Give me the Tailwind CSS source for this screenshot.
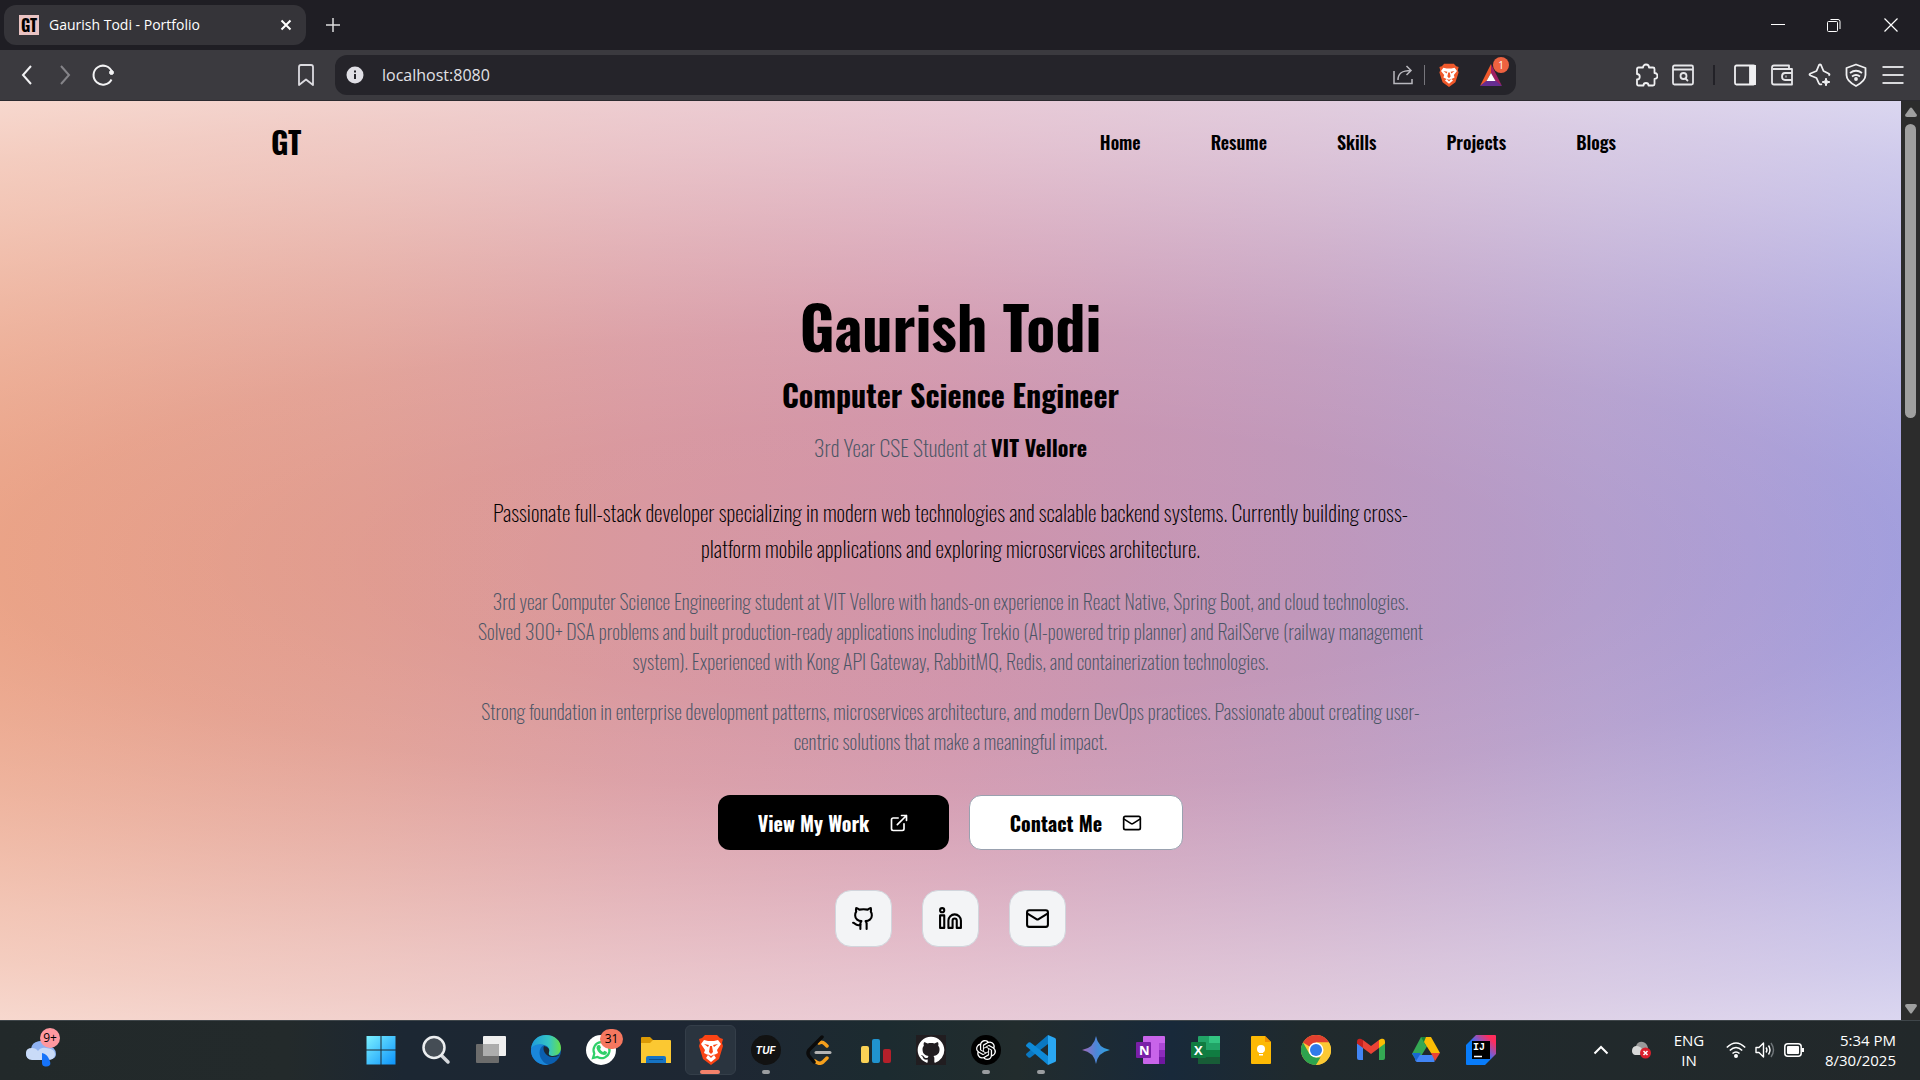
<!DOCTYPE html>
<html lang="en">
<head>
<meta charset="utf-8">
<title>Gaurish Todi - Portfolio</title>
<script src="https://cdn.jsdelivr.net/npm/@tailwindcss/browser@4"></script>
</head>
<body class="flex min-h-screen flex-col overflow-hidden bg-[#1f1e24] font-['Segoe_UI','Open_Sans',sans-serif] text-white">

<!-- Tab strip -->
<div class="flex h-[50px] items-center pl-1">
  <div class="flex h-10 w-[302px] items-center rounded-xl bg-[#353439] pl-[15px] pr-[10px]">
    <span class="flex size-5 items-center justify-center bg-[#e9c3c3] font-['Oswald','Roboto_Condensed','Liberation_Sans_Narrow',sans-serif] text-base font-bold text-black">GT</span>
    <span class="ml-[10px] flex-1 text-sm">Gaurish Todi - Portfolio</span>
    <button aria-label="Close tab" class="p-1"><svg class="size-3" viewBox="0 0 12 12" fill="none" stroke="#fff" stroke-width="2"><path d="M1.500 1.500l9 9M10.500 1.500l-9 9"/></svg></button>
  </div>
  <button aria-label="New tab" class="ml-[17px] p-0.5"><svg class="size-4" viewBox="0 0 16 16" fill="none" stroke="#ddd" stroke-width="1.500"><path d="M8 1v14M1 8h14"/></svg></button>
  <div class="ml-auto flex items-center">
    <button aria-label="Minimize" class="flex h-10 w-14 items-center justify-center"><svg class="size-4" viewBox="0 0 16 16" stroke="#fff"><path d="M1 7.500h14"/></svg></button>
    <button aria-label="Restore" class="flex h-10 w-14 items-center justify-center"><svg class="size-4" viewBox="0 0 16 16" fill="none" stroke="#fff"><rect x="1.500" y="4.500" width="10" height="10" rx="1"/><path d="M4.500 2.500h7.500a2 2 0 0 1 2 2v7.500"/></svg></button>
    <button aria-label="Close" class="flex h-10 w-[58px] items-center justify-center"><svg class="size-4" viewBox="0 0 16 16" fill="none" stroke="#fff" stroke-width="1.200"><path d="M1.500 1.500l13 13M14.500 1.500l-13 13"/></svg></button>
  </div>
</div>

<!-- Toolbar -->
<div class="flex h-[51px] items-center border-b border-[#2b2a2f] bg-[#3b3a3f] pl-2 pr-[9px]">
  <button aria-label="Back" class="flex w-[38px] justify-center"><svg class="size-6" viewBox="0 0 24 24" fill="none" stroke="#f2f2f4" stroke-width="2"><path d="M16 3l-8 9 8 9"/></svg></button>
  <button aria-label="Forward" class="flex w-[38px] justify-center"><svg class="size-6" viewBox="0 0 24 24" fill="none" stroke="#858489" stroke-width="2"><path d="M8 3l8 9-8 9"/></svg></button>
  <button aria-label="Reload" class="flex w-[38px] justify-center"><svg class="size-6" viewBox="0 0 24 24" fill="none" stroke="#f2f2f4" stroke-width="2"><path d="M20.500 16.500A9.500 9.500 0 1 1 21 9"/><circle cx="20.500" cy="9.500" r="2" fill="#f2f2f4" stroke-width="1"/></svg></button>
  <button aria-label="Bookmark this page" class="ml-[165px] mr-[10px] flex w-[38px] justify-center"><svg class="size-6" viewBox="0 0 24 24" fill="none" stroke="#dcdbe0" stroke-width="1.800" stroke-linejoin="round"><path d="M5 4q0-2 2-2h10q2 0 2 2v18l-7-5.500L5 22z"/></svg></button>
  <div class="mr-[111px] flex h-10 flex-1 items-center rounded-xl bg-[#25242a] pl-[11px] pr-[13px]">
    <svg class="size-[18px]" viewBox="0 0 18 18"><circle cx="9" cy="9" r="8.500" fill="#e0dfe5"/><path d="M9 8v5M9 4.500v2" stroke="#25242a" stroke-width="2"/></svg>
    <input aria-label="Address" value="localhost:8080" class="ml-[18px] min-w-0 flex-1 bg-transparent text-base text-[#e2e1e6]">
    <button aria-label="Share"><svg class="size-[22px]" viewBox="0 0 22 22" fill="none" stroke="#b9b8be" stroke-width="1.500"><path d="M2 7v12.500h18V15M6 16c0-7 4-9.500 13-9.500M14.500 2l4.500 4.500-4.500 4.500"/></svg></button>
    <span class="ml-[10px] h-5 w-px bg-[#77767c]"></span>
    <button aria-label="Brave Shields" class="ml-3"><svg class="size-6" viewBox="0 0 30 30"><path fill="#f0592b" d="M9 1h12l3 3 3 1-1 4 1 3-4 12-8 6-8-6L3 12l1-3-1-4 3-1z"/><path fill="#fff" d="M8 6l4 1h6l4-1 3 4-4 5 1 3-4 2 2 2-5 4-5-4 2-2-4-2 1-3-4-5z"/><path fill="#f0592b" d="M8 10l5 1-1 2zM22 10l-5 1 1 2zM14 12h2l1 5-2 2-2-2zM12 20l3 1 3-1-3 3z"/></svg></button>
    <button aria-label="Brave Rewards" class="relative ml-[18px]"><svg class="size-6" viewBox="0 0 24 24"><path fill="#f0592b" d="M12 1v9l-5 9-6 4z"/><path fill="#9e1f63" d="M12 1v9l5 9 6 4z"/><path fill="#662d91" d="M1 23h22l-6-5H7z"/><path fill="#fff" d="M12 10l4.500 8h-9z"/></svg><span class="absolute -right-1.5 -top-1.5 flex size-4 items-center justify-center rounded-full bg-[#ee6240] text-[10px] leading-4">1</span></button>
  </div>
  <button aria-label="Extensions" class="flex w-[37px] justify-center"><svg class="size-6" viewBox="0 0 24 24" fill="none" stroke="#f0f0f2" stroke-width="1.800" stroke-linejoin="round"><path d="M3 6q0-1.500 1.500-1.500H9a3 3 0 0 1 6 0h4q1.500 0 1.500 1.500v4a3 3 0 0 1 0 6v5q0 1.500-1.500 1.500h-4.500a2.500 2.500 0 0 0-5 0h-5Q3 22.500 3 21v-4.500a2.700 2.700 0 0 0 0-5.500z"/></svg></button>
  <button aria-label="Search tabs" class="flex w-[37px] justify-center"><svg class="size-6" viewBox="0 0 24 24" fill="none" stroke="#e6e6e9" stroke-width="1.800"><rect x="2" y="2.500" width="20" height="19" rx="1.500"/><path d="M2 6.500h20M14.500 15.500l2.500 2.500"/><circle cx="12.500" cy="13" r="3"/></svg></button>
  <span class="ml-3 mr-[11px] h-5 w-0.5 bg-[#222127]"></span>
  <button aria-label="Sidebar" class="flex w-[37px] justify-center"><svg class="size-6" viewBox="0 0 24 24" fill="none" stroke="#f0f0f2" stroke-width="1.800"><rect x="2" y="2.500" width="20" height="19" rx="1.500"/><path fill="#f0f0f2" d="M17 3h5v18h-5z"/></svg></button>
  <button aria-label="Wallet" class="flex w-[37px] justify-center"><svg class="size-6" viewBox="0 0 24 24" fill="none" stroke="#e6e6e9" stroke-width="1.800" stroke-linejoin="round"><path d="M19 6V2.500H4q-2 0-2 2v15q0 2 2 2h18V6H3M22 10h-7q-3 0-3 3.500t3 3.500h7M15.500 13.500h1"/></svg></button>
  <button aria-label="Leo AI" class="flex w-[37px] justify-center"><svg class="size-6" viewBox="0 0 24 24" fill="none" stroke="#f0f0f2" stroke-width="1.800" stroke-linejoin="round"><path d="M15 21c-2 1-3 0-3.500-1.500l-2-4.500-6-2.500q-2-1 0-2l6-2.500L12 2q1-1 2 0l2.500 6 5 2.500q2 1 0 2"/><path fill="#f0f0f2" stroke-width="1" d="M19 15l1 3 3 1-3 1-1 3-1-3-3-1 3-1z"/></svg></button>
  <button aria-label="VPN" class="flex w-[37px] justify-center"><svg class="size-6" viewBox="0 0 24 24" fill="none" stroke="#f0f0f2" stroke-width="1.800" stroke-linejoin="round"><path d="M12 1.500l9.500 3.500v7q0 6-9.500 11Q2.500 18 2.500 12V5zM6 10q6-4.500 12 0M8 13.500q4-3 8 0"/><circle cx="12" cy="16" r="1"/></svg></button>
  <button aria-label="Menu" class="flex w-[37px] justify-center"><svg class="size-6" viewBox="0 0 24 24" stroke="#d9d9dc" stroke-width="2"><path d="M1.500 4h21M1.500 12h21M1.500 20h21"/></svg></button>
</div>

<!-- Web page and its scrollbar -->
<div class="flex flex-1">
  <div class="flex-1 bg-[linear-gradient(to_right,#e8997a_0%,#e09a8e_19%,#d8979f_34%,#d094ab_50%,#c096b9_68%,#b09acb_84%,#a697d2_92%,#9894d9_100%)] font-['Oswald','Roboto_Condensed','Liberation_Sans_Narrow',sans-serif] text-black">
    <div class="h-full bg-[radial-gradient(100%_50%_at_center,rgb(255_250_252/0)_0%,rgb(255_250_252/0.02)_30%,rgb(255_250_252/0.1)_50%,rgb(255_250_252/0.27)_70%,rgb(255_250_252/0.45)_90%,rgb(255_250_252/0.53)_100%,rgb(255_250_252/0.65)_112%)]">
      <header class="flex h-[82px] items-center justify-between pb-px pl-[271px] pr-[285px]">
        <a href="#" class="text-3xl font-bold">GT</a>
        <nav class="flex gap-[70px] text-lg font-semibold">
          <a href="#home">Home</a><a href="#resume">Resume</a><a href="#skills">Skills</a><a href="#projects">Projects</a><a href="#blogs">Blogs</a>
        </nav>
      </header>
      <main class="flex flex-col items-center whitespace-nowrap pt-[106px] text-center">
        <h1 class="text-[60px] font-bold leading-[72px]">Gaurish Todi</h1>
        <h2 class="mt-3.5 text-3xl font-bold leading-10">Computer Science Engineer</h2>
        <p class="mt-4 text-[22px] font-extralight leading-8 text-gray-600">3rd Year CSE Student at <strong class="font-bold text-black">VIT Vellore</strong></p>
        <p class="mt-[31px] text-[22px] font-extralight leading-9">Passionate full-stack developer specializing in modern web technologies and scalable backend systems. Currently building cross-<br>platform mobile applications and exploring microservices architecture.</p>
        <p class="mt-5 text-xl font-extralight leading-[30px] text-gray-600">3rd year Computer Science Engineering student at VIT Vellore with hands-on experience in React Native, Spring Boot, and cloud technologies.<br>Solved 300+ DSA problems and built production-ready applications including Trekio (AI-powered trip planner) and RailServe (railway management<br>system). Experienced with Kong API Gateway, RabbitMQ, Redis, and containerization technologies.</p>
        <p class="mt-5 text-xl font-extralight leading-[30px] text-gray-600">Strong foundation in enterprise development patterns, microservices architecture, and modern DevOps practices. Passionate about creating user-<br>centric solutions that make a meaningful impact.</p>
        <div class="mt-[39px] flex gap-5">
          <button class="flex h-[55px] w-[231px] items-center justify-center gap-5 rounded-xl bg-black text-xl font-bold text-white">View My Work <svg class="size-5" viewBox="0 0 24 24" fill="none" stroke="currentColor" stroke-width="2" stroke-linecap="round" stroke-linejoin="round"><path d="M15 3h6v6M10 14 21 3M18 13v6a2 2 0 0 1-2 2H5a2 2 0 0 1-2-2V8a2 2 0 0 1 2-2h6"/></svg></button>
          <button class="flex h-[55px] w-[214px] items-center justify-center gap-5 rounded-xl border border-gray-400 bg-white text-xl font-bold">Contact Me <svg class="size-5" viewBox="0 0 24 24" fill="none" stroke="currentColor" stroke-width="2" stroke-linecap="round" stroke-linejoin="round"><rect x="2" y="4" width="20" height="16" rx="2"/><path d="m22 7-8.970 5.700a1.940 1.940 0 0 1-2.060 0L2 7"/></svg></button>
        </div>
        <div class="mt-10 flex gap-[30px]">
          <a href="#github" aria-label="GitHub" class="flex size-[57px] items-center justify-center rounded-2xl border border-gray-300 bg-gray-100"><svg class="size-[25px]" viewBox="0 0 24 24" fill="none" stroke="currentColor" stroke-width="2" stroke-linecap="round" stroke-linejoin="round"><path d="M15 22v-4a4.800 4.800 0 0 0-1-3.500c3 0 6-2 6-5.500.08-1.250-.27-2.480-1-3.500.28-1.150.28-2.350 0-3.500 0 0-1 0-3 1.500-2.640-.5-5.360-.5-8 0C6 2 5 2 5 2c-.3 1.150-.3 2.350 0 3.500A5.403 5.403 0 0 0 4 9c0 3.500 3 5.500 6 5.500-.39.49-.68 1.050-.85 1.650-.17.6-.22 1.230-.15 1.850v4"/><path d="M9 18c-4.510 2-5-2-7-2"/></svg></a>
          <a href="#linkedin" aria-label="LinkedIn" class="flex size-[57px] items-center justify-center rounded-2xl border border-gray-300 bg-gray-100"><svg class="size-[25px]" viewBox="0 0 24 24" fill="none" stroke="currentColor" stroke-width="2" stroke-linecap="round" stroke-linejoin="round"><path d="M16 8a6 6 0 0 1 6 6v7h-4v-7a2 2 0 0 0-2-2 2 2 0 0 0-2 2v7h-4v-7a6 6 0 0 1 6-6z"/><rect x="2" y="9" width="4" height="12"/><circle cx="4" cy="4" r="2"/></svg></a>
          <a href="#mail" aria-label="Email" class="flex size-[57px] items-center justify-center rounded-2xl border border-gray-300 bg-gray-100"><svg class="size-[25px]" viewBox="0 0 24 24" fill="none" stroke="currentColor" stroke-width="2" stroke-linecap="round" stroke-linejoin="round"><rect x="2" y="4" width="20" height="16" rx="2"/><path d="m22 7-8.970 5.700a1.940 1.940 0 0 1-2.060 0L2 7"/></svg></a>
        </div>
      </main>
    </div>
  </div>
  <div class="flex w-[19px] flex-col items-center bg-[#2c2c2c] py-1.5">
    <svg class="h-[10px] w-3" viewBox="0 0 12 10" fill="#9f9f9f"><path d="M5 1q1-1 2 0l5 7q0 2-2 2H2q-2 0-2-2z"/></svg>
    <span class="mt-[7px] h-[294px] w-[11px] rounded-full bg-[#9f9f9f]"></span>
    <svg class="mt-auto h-[10px] w-3" viewBox="0 0 12 10" fill="#9f9f9f"><path d="M5 9q1 1 2 0l5-7q0-2-2-2H2Q0 0 0 2z"/></svg>
  </div>
</div>

<!-- Taskbar -->
<footer class="flex h-[60px] items-center border-t border-[#3f464a] bg-[linear-gradient(to_right,#22292a_0%,#232a2b_15%,#1c2733_21%,#1e2733_38%,#1c2b30_46%,#222c2d_53%,#18293a_61%,#202a2d_68%,#22282a_100%)] pb-px">
  <div class="w-[353px] pl-[25px]">
    <button aria-label="Weather" class="relative block"><svg class="size-9" viewBox="0 0 36 36"><path fill="#8fb2f2" d="M6 17a9 9 0 0 1 17-3 8 8 0 0 1 8 8q0 5-6 5H7q-6 0-6-5 0-4 5-5"/><path fill="#c9dbf8" d="M1 21q0-5 6-5 4 0 6 3 3-4 8-3 10 1 9 7-1 5-7 5H7q-6 0-6-7"/><path fill="#1673fa" d="M17 21q5 1 7 6 2 4 1 6-2 2-5 1.500-3-.5-3-3.500z"/></svg><span class="absolute -top-1 left-[15px] flex size-5 items-center justify-center rounded-full bg-[#ff98a0] text-xs text-black">9+</span></button>
  </div>
  <div class="flex">
    <button aria-label="Start" class="flex w-[55px] items-center justify-center"><svg class="size-[30px]" viewBox="0 0 30 30"><defs><linearGradient id="win" x1="0" y1="0" x2="1" y2="1"><stop stop-color="#7cf1ff"/><stop offset="1" stop-color="#0c93fb"/></linearGradient></defs><path fill="url(#win)" d="M.5 1h14v13.500H.5zM15.500 1H29.500v13.500h-14zM.5 15.500h14v14H.5zM15.500 15.500h14v14h-14z"/></svg></button>
    <button aria-label="Search" class="flex w-[55px] items-center justify-center"><svg class="size-[30px]" viewBox="0 0 30 30"><path d="M20 20l7 7" stroke="#d5d8dc" stroke-width="3.500" stroke-linecap="round"/><circle cx="13" cy="12.500" r="10.500" fill="#454d55" stroke="#eceef0" stroke-width="2.500"/></svg></button>
    <button aria-label="Task view" class="flex w-[55px] items-center justify-center"><svg class="size-[30px]" viewBox="0 0 30 30"><rect x="7" y="1" width="23" height="20" rx="1" fill="#efefef"/><rect y="9" width="23" height="19" rx="1" fill="#6c6c6c"/><path fill="#adadad" d="M7 9h15q1 0 1 1v11H7z"/></svg></button>
    <button aria-label="Edge" class="flex w-[55px] items-center justify-center"><svg class="size-[30px]" viewBox="0 0 30 30"><defs><linearGradient id="edg"><stop stop-color="#1f9bdc"/><stop offset=".6" stop-color="#35c6c4"/><stop offset="1" stop-color="#66e04a"/></linearGradient></defs><circle cx="15" cy="15" r="15" fill="#0b5fb0"/><path fill="url(#edg)" d="M0 14C1 5 7 0 15 0c9 0 15 6 15 13 0 5-4 8-8 8-5 0-5-2-4-4 1-3-1-6-5-7C8 9 3 10 0 14"/><path fill="#1a86d9" d="M0 14c2-4 8-6 13-4-5 2-6 10-2 15 2 3 4 4 7 5C8 31-1 24 0 14"/><path fill="#1d2732" d="M13 11c4 1 6 3 5 6-1 3 1 4 4 4 3 0 5-1 7-1-1 1-5 2-8 2-6 0-10-7-8-11"/></svg></button>
    <button aria-label="WhatsApp" class="relative flex w-[55px] items-center justify-center"><svg class="size-[30px]" viewBox="0 0 30 30"><circle cx="15" cy="15" r="15" fill="#fff"/><path fill="none" stroke="#2fd06a" stroke-width="2.200" d="M7 23l1.300-4.500A8 8 0 1 1 11.500 22z"/><path fill="#2fd06a" d="M12 10l2 .2 1 2.500-1 1.300q1 2 3 3l1.500-1.200 2.500 1.200q0 3-3 3-6-1-7.500-7 0-2 1.500-3"/></svg><span class="absolute -top-1.5 left-[27px] flex h-5 w-[23px] items-center justify-center rounded-full bg-[#f5775f] text-xs text-black">31</span></button>
    <button aria-label="File Explorer" class="flex w-[55px] items-center justify-center"><svg class="size-[30px]" viewBox="0 0 30 30"><path fill="#dc9a05" d="M0 3q0-1 1-1h8l4 4-4 4H0z"/><path fill="#fbc832" d="M0 8h9l3-3h17q1 0 1 1v22H0z"/><path fill="#1673c4" d="M5 28v-5q0-2 2-2h16q2 0 2 2v5z"/><path stroke="#0c4d8c" d="M8 24.500h14"/></svg></button>
    <button aria-label="Brave" class="relative mx-[2px] -my-2.5 flex h-[50px] w-[51px] items-center justify-center rounded-md border border-[#343e49] bg-[#2a343f]"><svg class="size-[30px]" viewBox="0 0 30 30"><path fill="#fb4415" d="M9 0h12l3 3 3 1-1 4 1 3-4 13-8 6-8-6L3 11l1-3-1-4 3-1z"/><path fill="#fff" d="M8 5l4 1h6l4-1 3 4-4 6 1 3-4 2 2 3-5 4-5-4 2-3-4-2 1-3-4-6z"/><path fill="#fb4415" d="M8 9l5 1-1 2zM22 9l-5 1 1 2zM14 11h2l1 6-2 2-2-2zM11 19l4 2 4-2-4 4z"/></svg><span class="absolute bottom-0 left-[14px] h-1 w-5 rounded-full bg-[#f5826b]"></span></button>
    <button aria-label="takeUforward" class="relative flex w-[55px] items-center justify-center"><span class="flex size-[30px] items-center justify-center rounded-full bg-[#121212] font-['Inter',sans-serif] text-[10px] font-bold italic">TUF</span><span class="absolute -bottom-[9px] h-1 w-2 rounded-full bg-[#9a9da0]"></span></button>
    <button aria-label="LeetCode" class="flex w-[55px] items-center justify-center"><svg class="size-[30px]" viewBox="0 0 30 30" fill="none" stroke-width="3.500" stroke-linecap="round"><path stroke="#f6a01c" d="M13 8q3-2 6 1l2 2M9 26q4 4 8 1l4-4"/><path stroke="#0b0b0b" d="M16 2L3 15q-2 3 0 6l5 6"/><path stroke="#b3b3b3" stroke-width="3" d="M10 17.500h14"/></svg></button>
    <button aria-label="Analytics" class="flex w-[55px] items-center justify-center"><svg class="size-[30px]" viewBox="0 0 30 30"><rect y="11" width="8" height="17" rx="2" fill="#f9d155"/><rect x="11" y="4" width="8" height="24" rx="2" fill="#2093ce"/><rect x="22" y="14" width="8" height="14" rx="2" fill="#b4202a"/></svg></button>
    <button aria-label="GitHub" class="flex w-[55px] items-center justify-center"><svg class="size-[30px] bg-[#211d20]" viewBox="-1 -1 18 18"><path fill="#fff" d="M8 0C3.580 0 0 3.580 0 8c0 3.540 2.290 6.530 5.470 7.590.4.070.55-.17.55-.38 0-.19-.01-.82-.01-1.490-2.010.37-2.530-.49-2.690-.94-.09-.23-.48-.94-.82-1.130-.28-.15-.68-.52-.01-.53.63-.01 1.080.58 1.230.82.72 1.210 1.870.87 2.330.66.07-.52.28-.87.51-1.070-1.780-.2-3.640-.89-3.640-3.950 0-.87.31-1.590.82-2.150-.08-.2-.36-1.020.08-2.120 0 0 .67-.21 2.200.82.640-.18 1.320-.27 2-.27s1.360.09 2 .27c1.530-1.040 2.200-.82 2.200-.82.440 1.100.16 1.920.08 2.120.51.56.82 1.270.82 2.150 0 3.070-1.870 3.750-3.650 3.950.29.25.54.73.54 1.480 0 1.070-.01 1.930-.01 2.200 0 .21.15.46.55.38A8.010 8.010 0 0 0 16 8c0-4.420-3.580-8-8-8"/></svg></button>
    <button aria-label="ChatGPT" class="relative flex w-[55px] items-center justify-center"><svg class="size-[30px] rounded-full bg-black" viewBox="-6 -6 36 36"><path fill="#fff" d="M22.2819 9.8211a5.9847 5.9847 0 0 0-.5157-4.9108 6.0462 6.0462 0 0 0-6.5098-2.9A6.0651 6.0651 0 0 0 4.9807 4.1818a5.9847 5.9847 0 0 0-3.9977 2.9 6.0462 6.0462 0 0 0 .7427 7.0966 5.98 5.98 0 0 0 .511 4.9107 6.051 6.051 0 0 0 6.5146 2.9001A5.9847 5.9847 0 0 0 13.2599 24a6.0557 6.0557 0 0 0 5.7718-4.2058 5.9894 5.9894 0 0 0 3.9977-2.9001 6.0557 6.0557 0 0 0-.7475-7.0729zm-9.022 12.6081a4.4755 4.4755 0 0 1-2.8764-1.0408l.1419-.0804 4.7783-2.7582a.7948.7948 0 0 0 .3927-.6813v-6.7369l2.02 1.1686a.071.071 0 0 1 .038.052v5.5826a4.504 4.504 0 0 1-4.4945 4.4944zm-9.6607-4.1254a4.4708 4.4708 0 0 1-.5346-3.0137l.142.0852 4.783 2.7582a.7712.7712 0 0 0 .7806 0l5.8428-3.3685v2.3324a.0804.0804 0 0 1-.0332.0615L9.74 19.9502a4.4992 4.4992 0 0 1-6.1408-1.6464zM2.3408 7.8956a4.485 4.485 0 0 1 2.3655-1.9728V11.6a.7664.7664 0 0 0 .3879.6765l5.8144 3.3543-2.0201 1.1685a.0757.0757 0 0 1-.071 0l-4.8303-2.7865A4.504 4.504 0 0 1 2.3408 7.872zm16.5963 3.8558L13.1038 8.364 15.1192 7.2a.0757.0757 0 0 1 .071 0l4.8303 2.7913a4.4944 4.4944 0 0 1-.6765 8.1042v-5.6772a.79.79 0 0 0-.407-.667zm2.0107-3.0231l-.142-.0852-4.7735-2.7818a.7759.7759 0 0 0-.7854 0L9.409 9.2297V6.8974a.0662.0662 0 0 1 .0284-.0615l4.8303-2.7866a4.4992 4.4992 0 0 1 6.6802 4.66zM8.3065 12.863l-2.02-1.1638a.0804.0804 0 0 1-.038-.0567V6.0742a4.4992 4.4992 0 0 1 7.3757-3.4537l-.142.0805L8.704 5.459a.7948.7948 0 0 0-.3927.6813zm1.0976-2.3654l2.602-1.4998 2.6069 1.4998v2.9994l-2.5974 1.4997-2.6067-1.4997Z"/></svg><span class="absolute -bottom-[9px] h-1 w-2 rounded-full bg-[#9a9da0]"></span></button>
    <button aria-label="Visual Studio Code" class="relative flex w-[55px] items-center justify-center"><svg class="size-[30px]" viewBox="0 0 30 30"><path fill="#0a78c2" d="M22 0v9L4.500 22.500q-1 .5-2 0L.5 20.500q-1-1 0-2z"/><path fill="#0e8ad8" d="M22 30v-9L4.500 7.500q-1-.5-2 0L.5 9.500q-1 1 0 2z"/><path fill="#2aa7f2" d="M22 0l7 3q1 .5 1 1.500v21q0 1-1 1.500l-7 3z"/></svg><span class="absolute -bottom-[9px] h-1 w-2 rounded-full bg-[#9a9da0]"></span></button>
    <button aria-label="Gemini" class="flex w-[55px] items-center justify-center"><svg class="size-[30px]" viewBox="0 0 30 30"><defs><linearGradient id="gem"><stop stop-color="#a568b8"/><stop offset=".5" stop-color="#4d86d8"/><stop offset="1" stop-color="#2aa6de"/></linearGradient></defs><path fill="url(#gem)" d="M15 1q2 12 14 14-12 2-14 14Q13 17 1 15 13 13 15 1"/></svg></button>
    <button aria-label="OneNote" class="flex w-[55px] items-center justify-center"><svg class="size-[30px]" viewBox="0 0 30 30"><rect x="7" y="1" width="22" height="28" rx="1" fill="#c864ea"/><path fill="#ab47d4" d="M23 8h6v7h-6z"/><path fill="#8c2bbb" d="M23 15h6v7h-6z"/><path fill="#6f17a0" d="M23 22h6v7h-6z"/><rect y="7" width="15" height="16" rx="1" fill="#7a1fa8"/><text x="3" y="20" fill="#fff" font-size="13" font-weight="bold" font-family="Open Sans">N</text></svg></button>
    <button aria-label="Excel" class="flex w-[55px] items-center justify-center"><svg class="size-[30px]" viewBox="0 0 30 30"><rect x="7" y="1" width="22" height="28" rx="1" fill="#21a366"/><path fill="#33c481" d="M18 1h11v7H18z"/><path fill="#107c41" d="M7 15h22v7H7z"/><path fill="#185c37" d="M7 22h22v7H7z"/><rect y="7" width="15" height="16" rx="1" fill="#107c41"/><text x="3" y="20" fill="#fff" font-size="13" font-weight="bold" font-family="Open Sans">X</text></svg></button>
    <button aria-label="Keep" class="flex w-[55px] items-center justify-center"><svg class="size-[30px]" viewBox="0 0 30 30"><path fill="#fdb904" d="M5 2q0-1 1-1h13l6 6v21q0 1-1 1H6q-1 0-1-1z"/><path fill="#f08f00" d="M19 1l6 6h-6z"/><circle cx="15" cy="14" r="4" fill="#fff"/><path fill="#fff" d="M13 15h4v3h-4zM13 19h4v1.500h-4z"/></svg></button>
    <button aria-label="Chrome" class="flex w-[55px] items-center justify-center"><svg class="size-[30px]" viewBox="0 0 30 30"><circle cx="15" cy="15" r="15" fill="#fcc934"/><path fill="#e2402f" d="M2 7.500A15 15 0 0 1 28 7.500H15v8z"/><path fill="#2da34e" d="M2 7.500L8.500 19l6.500 3.500h6.500L15 30A15 15 0 0 1 2 7.500"/><path fill="#fcc934" d="M28 7.500H15v15l6.500-3.500L15 30A15 15 0 0 0 28 7.500"/><circle cx="15" cy="15" r="7.500" fill="#fff"/><circle cx="15" cy="15" r="6" fill="#2f7bea"/></svg></button>
    <button aria-label="Gmail" class="flex w-[55px] items-center justify-center"><svg class="size-[30px]" viewBox="0 0 30 30"><path fill="#4285f4" d="M1 8l6 4v13H3q-2 0-2-2z"/><path fill="#34a853" d="M29 8l-6 4v13h4q2 0 2-2z"/><path fill="#ea4335" d="M7 5l8 6 8-6v8l-8 6-8-6z"/><path fill="#c5221f" d="M1 7c0-4 3-4 6-2v8L1 8.500z"/><path fill="#fbbc04" d="M29 7c0-4-3-4-6-2v8l6-4.500z"/></svg></button>
    <button aria-label="Google Drive" class="flex w-[55px] items-center justify-center"><svg class="size-[30px]" viewBox="0 0 30 30"><path fill="#34a853" d="M10 2h5l3 6L6.500 27 1 19z"/><path fill="#188038" d="M10 2h10l-5 9z"/><path fill="#fbbc04" d="M15 2h5l9 16h-9l-7-11z"/><path fill="#4285f4" d="M6.500 20h17v7H6q-1 0-2-2z"/><path fill="#1967d2" d="M1 18h9l-5 8z"/><path fill="#ea4335" d="M20 18h9l-5 8z"/></svg></button>
    <button aria-label="IntelliJ IDEA" class="flex w-[55px] items-center justify-center"><svg class="size-[30px]" viewBox="0 0 30 30"><defs><linearGradient id="ij" x1="0" y1="1" x2="1" y2="0"><stop offset=".45" stop-color="#087cfa"/><stop offset=".6" stop-color="#7b5bd0"/><stop offset=".85" stop-color="#fe2d5d"/></linearGradient></defs><path fill="url(#ij)" d="M0 10L10 0h19q1 0 1 1v18L19 30H1q-1 0-1-1z"/><path d="M6 6h18v18H6z"/><path stroke="#fff" stroke-width="1.500" d="M8 21.500h8"/><text x="7" y="15" fill="#fff" font-size="10" font-weight="bold" font-family="Liberation Mono">IJ</text></svg></button>
  </div>
  <div class="ml-auto flex items-center pr-6 text-[15px] leading-5">
    <button aria-label="Show hidden icons"><svg class="size-4" viewBox="0 0 16 16" fill="none" stroke="#fff" stroke-width="2"><path d="M1.500 11.500L8 5l6.500 6.500"/></svg></button>
    <button aria-label="OneDrive" class="ml-[22px]"><svg class="h-[18px] w-5" viewBox="0 0 20 18"><path fill="#9a9a9a" d="M5 5q2-5 7-4 4 1 5 6l-6 4-8-3z"/><path fill="#d8d8d8" d="M1 10q0-5 5-5 4 0 7 6l-4 3H4q-3-1-3-4"/><circle cx="14.500" cy="12" r="5.500" fill="#d9202c"/><path stroke="#fff" stroke-width="1.500" d="M12.500 10l4 4M16.500 10l-4 4"/></svg></button>
    <button aria-label="Language" class="ml-[22px] w-8 text-center">ENG<br>IN</button>
    <button aria-label="Network, volume, battery" class="ml-[21px] flex items-center gap-[9px]">
      <svg class="h-[18px] w-5" viewBox="0 0 20 18" fill="none" stroke="#fff" stroke-width="1.600"><path d="M.8 6.500q9.200-9 18.400 0M3.800 9.500q6.200-6 12.400 0M6.500 12.500q3.500-3 7 0"/><circle cx="10" cy="15" r="1.200" fill="#fff"/></svg>
      <svg class="h-[18px] w-5" viewBox="0 0 20 18" fill="none" stroke="#fff" stroke-width="1.400" stroke-linejoin="round"><path d="M1 6.500h3L8.500 2v14L4 11.500H1zM11 6.500q2 2.500 0 5M13.500 4.500q3 4.500 0 9"/><path stroke="#70767a" d="M16 2q5 7 0 14"/></svg>
      <svg class="h-[14px] w-5" viewBox="0 0 20 14"><rect x=".8" y=".8" width="16.400" height="12.400" rx="3" fill="none" stroke="#fff" stroke-width="1.500"/><rect x="3" y="3" width="12" height="8" rx="1" fill="#fff"/><path stroke="#fff" stroke-width="2" d="M19 5v4"/></svg>
    </button>
    <div class="ml-5 w-[72px] whitespace-nowrap text-right">5:34 PM<br>8/30/2025</div>
  </div>
</footer>
</body>
</html>
